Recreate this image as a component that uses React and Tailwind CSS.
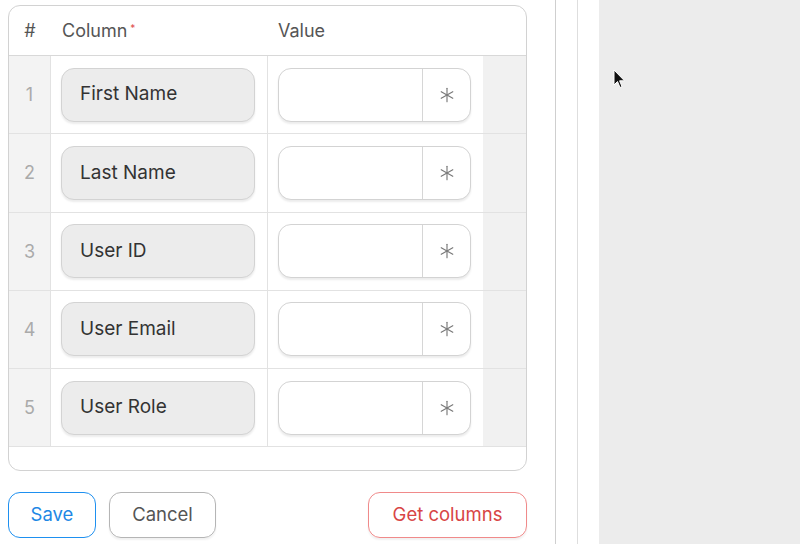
import React from "react";

const rows = ["First Name", "Last Name", "User ID", "User Email", "User Role"];

function Ast() {
  return (
    <svg width="20" height="20" viewBox="0 0 24 24" fill="none" stroke="#7a7a7a" strokeWidth="1.4" strokeLinecap="round">
      <path d="M12 4v16" />
      <path d="M18.93 8 5.07 16" />
      <path d="M5.07 8 18.93 16" />
    </svg>
  );
}

export default function App() {
  return (
    <div className="flex h-[544px] w-[800px] overflow-hidden bg-white text-[#444]" style={{ fontFamily: "Inter, 'Noto Sans', sans-serif" }}>
      <div className="flex w-[556px] shrink-0 flex-col border-r border-[#cfcfcf] pl-2 pr-[28px] pt-[5px]">
        <div className="overflow-hidden rounded-[12px] border border-[#d2d2d2]">
          <div className="grid h-[50px] grid-cols-[42px_217px_215px_44px] items-center border-b border-[#d8d8d8] text-[18px] text-[#555]">
            <div className="text-center">#</div>
            <div className="pl-[11px]">
              Column<sup className="relative -top-[5px] ml-[3px] text-[10px] text-[#e05050]">*</sup>
            </div>
            <div className="pl-[10px]">Value</div>
            <div />
          </div>
          {rows.map((r, i) => (
            <div key={r} className="grid h-[78.25px] grid-cols-[42px_217px_215px_44px] border-b border-[#e2e2e2]">
              <div className="flex items-center justify-center border-r border-[#e2e2e2] bg-[#f3f3f3] text-[18px] text-[#aaa]">{i + 1}</div>
              <div className="flex items-center border-r border-[#e2e2e2] pl-[10px] pr-[12px]">
                <div className="flex h-[54px] w-full items-center rounded-[13px] border border-[#d3d3d3] bg-[#ececec] pl-[18px] text-[19px] text-[#333] shadow-[0_2px_2px_rgba(0,0,0,0.08)]">
                  {r}
                </div>
              </div>
              <div className="flex items-center pl-[10px] pr-[12px]">
                <div className="flex h-[54px] w-full overflow-hidden rounded-[13px] border border-[#d3d3d3] bg-white shadow-[0_2px_2px_rgba(0,0,0,0.08)]">
                  <div className="flex-1" />
                  <div className="flex w-[48px] items-center justify-center border-l border-[#d6d6d6]">
                    <Ast />
                  </div>
                </div>
              </div>
              <div className="bg-[#f1f1f1]" />
            </div>
          ))}
          <div className="h-[23px]" />
        </div>
        <div className="mt-[21px] flex items-center text-[18.5px]">
          <button className="h-[46px] w-[88px] rounded-[12px] border border-[#1e90f0] text-[#1e88e5]">Save</button>
          <button className="ml-[13px] h-[46px] w-[107px] rounded-[12px] border border-[#b5b5b5] text-[#555] shadow-[0_2px_2px_rgba(0,0,0,0.06)]">Cancel</button>
          <div className="flex-1" />
          <button className="h-[46px] w-[159px] rounded-[12px] border border-[#f08a8a] text-[#d84545] shadow-[0_2px_2px_rgba(0,0,0,0.06)]">Get columns</button>
        </div>
      </div>
      <div className="w-[22px] shrink-0 border-r border-[#dedede]" />
      <div className="w-[21px] shrink-0" />
      <div className="relative flex-1 bg-[#ececec]">
        <svg className="absolute left-[14px] top-[69px]" width="14" height="20" viewBox="0 0 14 20">
          <path d="M1 1 L1 16 L4.5 12.5 L7 18.5 L9 17.6 L6.6 11.8 L11.5 11.8 Z" fill="#111" stroke="#fff" strokeWidth="1" />
        </svg>
      </div>
    </div>
  );
}
